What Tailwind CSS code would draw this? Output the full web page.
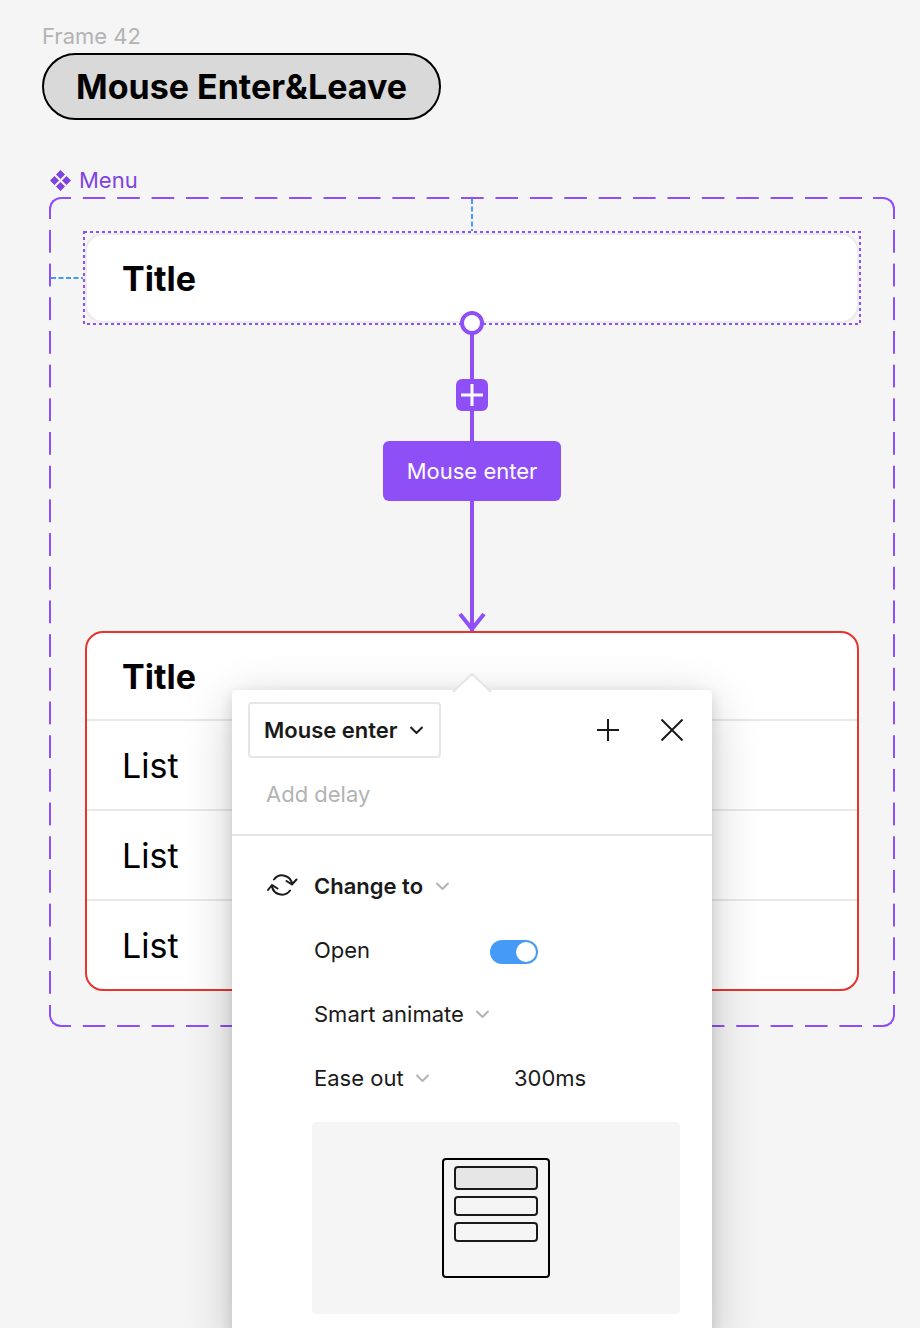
<!DOCTYPE html>
<html lang="en">
<head>
  <meta charset="UTF-8">
  <meta name="viewport" content="width=device-width, initial-scale=1.0">
  <title>Mouse Enter&amp;Leave</title>
  <script src="https://cdn.jsdelivr.net/npm/@tailwindcss/browser@4"></script>
</head>
<body class="bg-[#f5f5f5] font-['Inter',sans-serif] text-[22px] text-[#1a1a1a]">
  <main class="h-screen overflow-hidden pt-5">

    <!-- Frame heading -->
    <header class="flex flex-col items-start pl-[42px]">
      <p class="h-[33px] leading-8 text-[#b3b3b3]">Frame 42</p>
      <h1 class="flex h-[67px] items-center rounded-full border-2 border-black bg-[#d9d9d9] px-8 text-[34px] font-bold text-black">Mouse Enter&amp;Leave</h1>
    </header>

    <!-- Component label -->
    <div class="mt-[43px] flex h-[34px] items-center gap-2 pl-[50px] text-[#7f43e0]">
      <svg class="size-[21px]" viewBox="0 0 21 21" fill="currentColor" aria-hidden="true">
        <path d="M10.500 0 15 4.500 10.500 9 6 4.500zM10.500 12 15 16.500 10.500 21 6 16.500zM4.500 6 9 10.500 4.500 15 0 10.500zM16.500 6 21 10.500 16.500 15 12 10.500z"/>
      </svg>
      <span>Menu</span>
    </div>

    <!-- Component set -->
    <section class="relative mr-[25px] ml-[49px] p-9">

      <!-- Dashed outline: four corners and four strips -->
      <div class="absolute top-0 left-0 size-[22px] rounded-tl-xl border-t-2 border-l-2 border-[#8f4ff7]"></div>
      <div class="absolute top-0 right-0 size-[22px] rounded-tr-xl border-t-2 border-r-2 border-[#8f4ff7]"></div>
      <div class="absolute bottom-0 left-0 size-[22px] rounded-bl-xl border-b-2 border-l-2 border-[#8f4ff7]"></div>
      <div class="absolute right-0 bottom-0 size-[22px] rounded-br-xl border-r-2 border-b-2 border-[#8f4ff7]"></div>
      <div class="absolute top-0 right-[33px] left-[22px] h-0.5 bg-[linear-gradient(to_right,transparent_33%,#8f4ff7_33%)] bg-[length:34px_2px] bg-repeat-round"></div>
      <div class="absolute right-[33px] bottom-0 left-[22px] h-0.5 bg-[linear-gradient(to_right,transparent_33%,#8f4ff7_33%)] bg-[length:34px_2px] bg-repeat-round"></div>
      <div class="absolute top-[22px] bottom-[33px] left-0 w-0.5 bg-[linear-gradient(to_bottom,transparent_33%,#8f4ff7_33%)] bg-[length:2px_34px] bg-repeat-round"></div>
      <div class="absolute top-[22px] right-0 bottom-[33px] w-0.5 bg-[linear-gradient(to_bottom,transparent_33%,#8f4ff7_33%)] bg-[length:2px_34px] bg-repeat-round"></div>

      <!-- Closed variant -->
      <div class="relative flex h-[90px] items-center rounded-[18px] border-2 border-[#ebebeb] bg-white px-[35px]">
        <h2 class="text-[34px] font-bold text-black">Title</h2>
        <svg class="absolute -inset-[3px] h-[calc(100%+6px)] w-[calc(100%+6px)] overflow-visible" aria-hidden="true">
          <rect width="100%" height="100%" fill="none" stroke="#8f4ff7" stroke-width="2" stroke-dasharray="3 3"/>
        </svg>
        <svg class="absolute top-[42px] -left-9 h-0.5 w-8" aria-hidden="true">
          <line y1="1" x2="32" y2="1" stroke="#459af7" stroke-width="2" stroke-dasharray="5 2.5"/>
        </svg>
        <svg class="absolute -top-9 left-1/2 h-8 w-0.5 -translate-x-1/2" aria-hidden="true">
          <line x1="1" x2="1" y2="32" stroke="#459af7" stroke-width="2" stroke-dasharray="5 2.5"/>
        </svg>
        <span class="absolute -bottom-3.5 left-1/2 z-10 size-6 -translate-x-1/2 rounded-full border-4 border-[#8f4ff7] bg-white"></span>
      </div>

      <!-- Interaction arrow -->
      <div class="relative flex flex-col items-center">
        <span class="h-14 w-1 bg-[#8f4ff7]"></span>
        <button type="button" aria-label="Add interaction" class="flex size-8 items-center justify-center rounded-md bg-[#8f4ff7]">
          <svg class="size-6" viewBox="0 0 24 24" stroke="white" stroke-width="3" aria-hidden="true"><path d="M12 1v22M1 12h22"/></svg>
        </button>
        <span class="h-[30px] w-1 bg-[#8f4ff7]"></span>
        <span class="flex h-15 items-center rounded-md bg-[#8f4ff7] px-6 text-white">Mouse enter</span>
        <span class="h-[130px] w-1 bg-[#8f4ff7]"></span>
        <svg class="absolute bottom-0 z-10 h-[18px] w-7" viewBox="0 0 28 18" fill="none" stroke="#8f4ff7" stroke-width="4" aria-hidden="true"><path d="M2 1l12 15L26 1"/></svg>
      </div>

      <!-- Open variant -->
      <div class="rounded-[18px] border-2 border-[#e8342c] bg-white text-[34px] text-black">
        <h2 class="flex h-[86px] items-center px-[35px] font-bold">Title</h2>
        <ul>
          <li class="flex h-[90px] items-center border-t-2 border-[#e8e8e8] px-[35px]">List</li>
          <li class="flex h-[90px] items-center border-t-2 border-[#e8e8e8] px-[35px]">List</li>
          <li class="flex h-[90px] items-center border-t-2 border-[#e8e8e8] px-[35px]">List</li>
        </ul>
      </div>

      <!-- Interaction details popover -->
      <div class="absolute top-[493px] left-1/2 z-20 w-[480px] -translate-x-1/2 rounded-sm bg-white shadow-[0_12px_50px_rgba(0,0,0,0.2),0_4px_14px_rgba(0,0,0,0.12)]">
        <svg class="absolute -top-[17px] left-1/2 h-[19px] w-10 -translate-x-1/2" viewBox="0 0 40 19" fill="white" stroke="#e6e6e6" stroke-width="2" aria-hidden="true"><path d="M1 19L20 1l19 18"/></svg>

        <div class="border-b-2 border-[#e6e6e6] pt-3 pb-1">
          <div class="flex pr-2 pl-4">
            <div class="relative mr-auto">
              <select aria-label="Trigger" class="h-14 appearance-none rounded-sm border-2 border-[#e6e6e6] bg-white pr-10 pl-3.5 font-semibold">
                <option>Mouse enter</option>
                <option>Mouse leave</option>
              </select>
              <svg class="pointer-events-none absolute top-6 right-[18px] h-2 w-[13px]" viewBox="0 0 13 8" fill="none" stroke="currentColor" stroke-width="2" aria-hidden="true"><path d="M.5 1l6 6 6-6"/></svg>
            </div>
            <button type="button" aria-label="Add action" class="flex h-14 w-16 items-center justify-center">
              <svg class="size-[22px]" viewBox="0 0 22 22" stroke="currentColor" stroke-width="2" aria-hidden="true"><path d="M11 0v22M0 11h22"/></svg>
            </button>
            <button type="button" aria-label="Close" class="flex h-14 w-16 items-center justify-center">
              <svg class="size-[22px]" viewBox="0 0 22 22" stroke="currentColor" stroke-width="2" aria-hidden="true"><path d="M.5.5l21 21M21.500.5l-21 21"/></svg>
            </button>
          </div>
          <input type="text" aria-label="Delay" placeholder="Add delay" class="h-[72px] w-full px-[34px] outline-none placeholder:text-[#b3b3b3]">
        </div>

        <div class="pt-[18px] pr-8 pb-8 pl-20">
          <div class="relative flex h-16 items-center">
            <svg class="absolute top-[19px] -left-[46px] h-6 w-8" viewBox="0 0 32 24" fill="none" stroke="currentColor" stroke-width="2" stroke-linecap="round" aria-hidden="true">
              <path d="M8 6.500A10 10 0 0 1 26 11M20.500 8l5.500 3.500 4.500-5M24 17.500A10 10 0 0 1 6 13M11.500 15.500L6 12l-4 5"/>
            </svg>
            <div class="relative">
              <select aria-label="Action" class="h-10 appearance-none pr-[25px] pl-0.5 font-semibold">
                <option>Change to</option>
              </select>
              <svg class="pointer-events-none absolute top-4 right-0 h-2 w-[13px]" viewBox="0 0 13 8" fill="none" stroke="#b3b3b3" stroke-width="2" aria-hidden="true"><path d="M.5 1l6 6 6-6"/></svg>
            </div>
          </div>

          <div class="flex h-16 items-center pl-0.5">
            <label for="open" class="w-44">Open</label>
            <input id="open" type="checkbox" role="switch" checked class="mt-1 h-6 w-12 appearance-none rounded-full bg-[#459af7] after:mt-0.5 after:mr-0.5 after:ml-auto after:block after:size-5 after:rounded-full after:bg-white">
          </div>

          <div class="flex h-16 items-center">
            <div class="relative">
              <select aria-label="Animation" class="h-10 appearance-none pr-[25px] pl-0.5">
                <option>Smart animate</option>
                <option>Instant</option>
              </select>
              <svg class="pointer-events-none absolute top-4 right-0 h-2 w-[13px]" viewBox="0 0 13 8" fill="none" stroke="#b3b3b3" stroke-width="2" aria-hidden="true"><path d="M.5 1l6 6 6-6"/></svg>
            </div>
          </div>

          <div class="flex h-16 items-center">
            <div class="w-[202px]">
              <div class="relative inline-block">
                <select aria-label="Easing" class="h-10 appearance-none pr-[25px] pl-0.5">
                  <option>Ease out</option>
                  <option>Ease in</option>
                </select>
                <svg class="pointer-events-none absolute top-4 right-0 h-2 w-[13px]" viewBox="0 0 13 8" fill="none" stroke="#b3b3b3" stroke-width="2" aria-hidden="true"><path d="M.5 1l6 6 6-6"/></svg>
              </div>
            </div>
            <input type="text" aria-label="Duration" value="300ms" class="h-10 w-28 outline-none">
          </div>

          <!-- Animation preview -->
          <div class="mt-3 flex justify-center rounded-sm bg-[#f5f5f5] py-9">
            <div class="flex h-[120px] w-[108px] flex-col gap-1.5 rounded-sm border-2 border-black px-2.5 pt-1.5">
              <div class="h-6 rounded-sm border-2 border-[#1a1a1a] bg-[#e6e6e6]"></div>
              <div class="h-5 rounded-sm border-2 border-[#1a1a1a]"></div>
              <div class="h-5 rounded-sm border-2 border-[#1a1a1a]"></div>
            </div>
          </div>
        </div>
      </div>
    </section>
  </main>
</body>
</html>
